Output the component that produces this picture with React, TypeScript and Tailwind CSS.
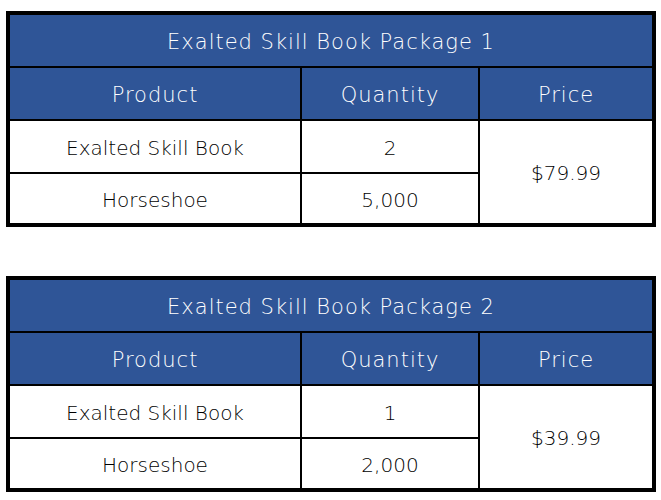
import React from 'react';

type Item = { name: string; qty: string };
type Pkg = { title: string; items: Item[]; price: string };

const packages: Pkg[] = [
  {
    title: 'Exalted Skill Book Package 1',
    items: [
      { name: 'Exalted Skill Book', qty: '2' },
      { name: 'Horseshoe', qty: '5,000' },
    ],
    price: '$79.99',
  },
  {
    title: 'Exalted Skill Book Package 2',
    items: [
      { name: 'Exalted Skill Book', qty: '1' },
      { name: 'Horseshoe', qty: '2,000' },
    ],
    price: '$39.99',
  },
];

const PackageTable: React.FC<{ pkg: Pkg }> = ({ pkg }) => (
  <div className="w-[650px] border-4 border-black">
    {/* title */}
    <div className="h-[53px] pt-1 border-b-2 border-black bg-[#2f5597] flex items-center justify-center text-white text-[21px] tracking-[1px] font-extralight">
      {pkg.title}
    </div>

    <div className="grid grid-cols-[292px_178px_172px] font-extralight">
      {/* header */}
      <div className="h-[53px] pt-1 border-r-2 border-b-2 border-black bg-[#2f5597] text-white text-[21px] tracking-[1px] flex items-center justify-center">
        Product
      </div>
      <div className="h-[53px] pt-1 border-r-2 border-b-2 border-black bg-[#2f5597] text-white text-[21px] tracking-[1px] flex items-center justify-center">
        Quantity
      </div>
      <div className="h-[53px] pt-1 border-b-2 border-black bg-[#2f5597] text-white text-[21px] tracking-[1px] flex items-center justify-center">
        Price
      </div>

      {/* rows */}
      <div className="h-[53px] pt-0.5 border-r-2 border-b-2 border-black flex items-center justify-center text-[20px]">
        {pkg.items[0].name}
      </div>
      <div className="h-[53px] pt-0.5 border-r-2 border-b-2 border-black flex items-center justify-center text-[20px]">
        {pkg.items[0].qty}
      </div>
      <div className="row-span-2 pt-0.5 flex items-center justify-center text-[20px]">
        {pkg.price}
      </div>
      <div className="h-[49px] pt-0.5 border-r-2 border-black flex items-center justify-center text-[20px]">
        {pkg.items[1].name}
      </div>
      <div className="h-[49px] pt-0.5 border-r-2 border-black flex items-center justify-center text-[20px]">
        {pkg.items[1].qty}
      </div>
    </div>
  </div>
);

export default function App() {
  return (
    <div
      className="w-[661px] h-[500px] bg-white text-black pl-[6px] pt-[11px] flex flex-col gap-[49px]"
      style={{ fontFamily: '"DejaVu Sans", "Liberation Sans", sans-serif' }}
    >
      {packages.map((p) => (
        <PackageTable key={p.title} pkg={p} />
      ))}
    </div>
  );
}
